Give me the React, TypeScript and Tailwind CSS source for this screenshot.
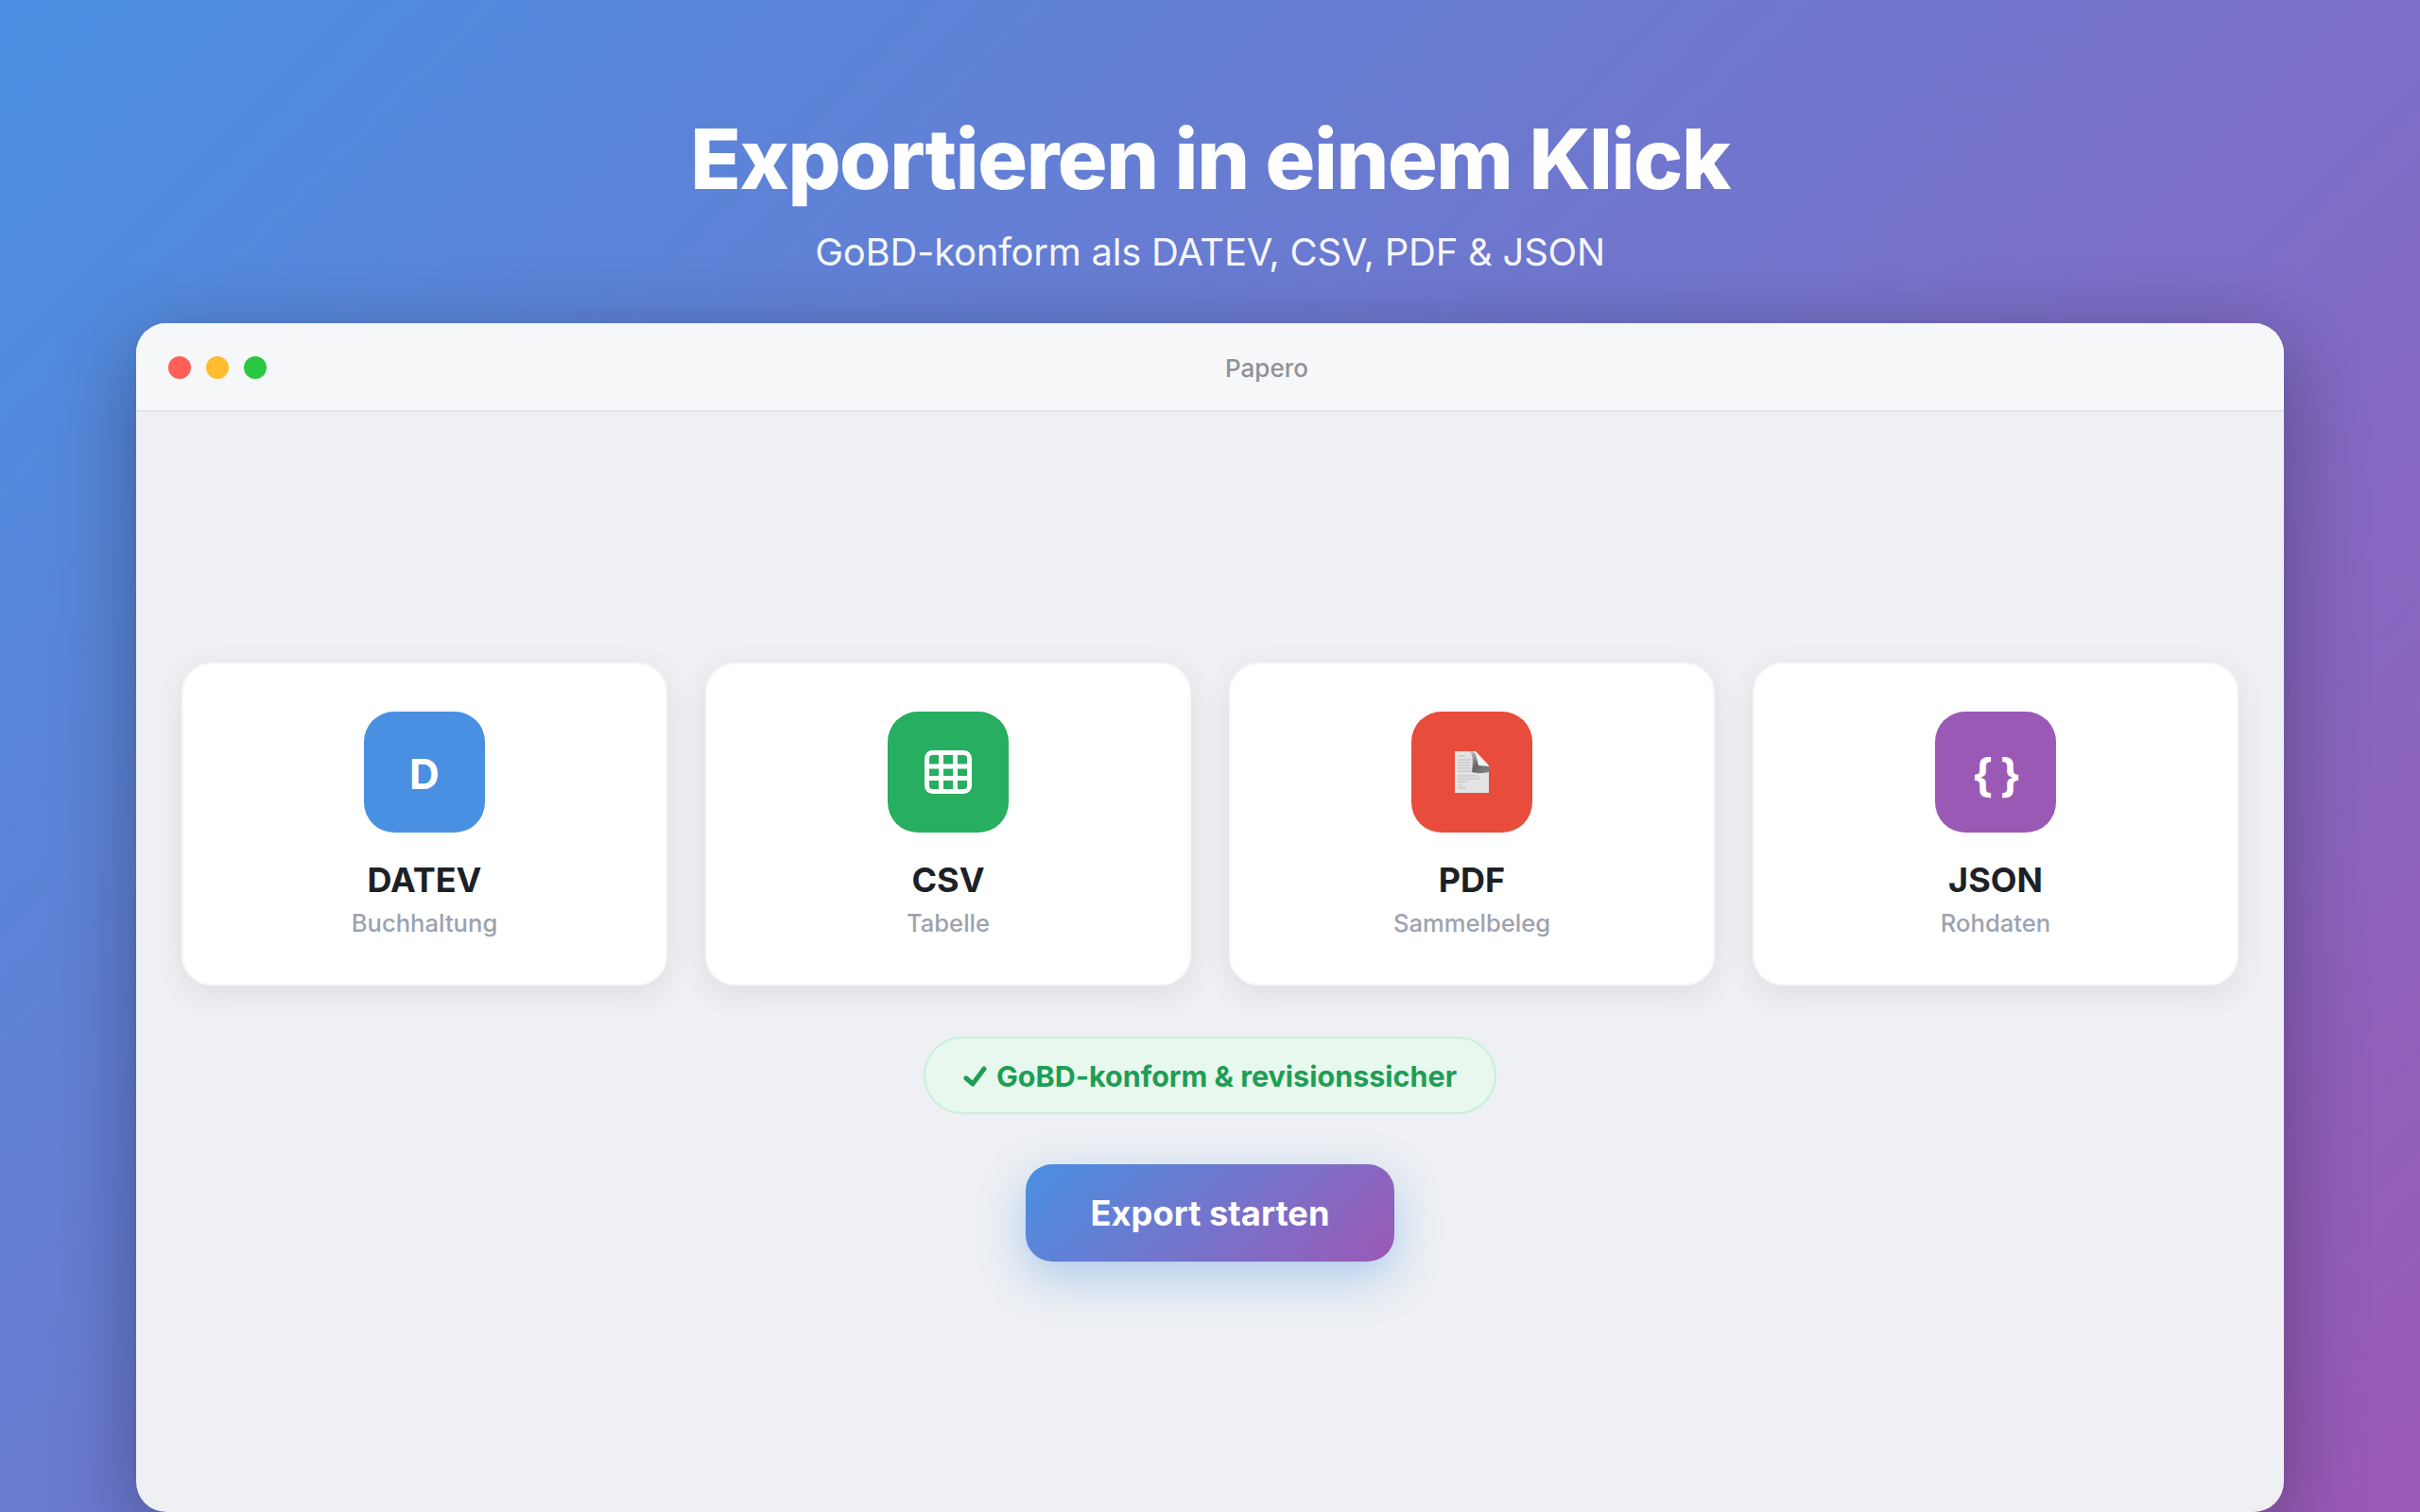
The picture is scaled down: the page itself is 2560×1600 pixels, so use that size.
const FORMATS = [
  { name: 'DATEV', sub: 'Buchhaltung', bg: 'bg-[#4a90e2]', icon: <span className="mt-[3px] text-[44px] font-bold leading-none text-white">D</span> },
  { name: 'CSV', sub: 'Tabelle', bg: 'bg-[#27ae60]', icon: <GridIcon /> },
  { name: 'PDF', sub: 'Sammelbeleg', bg: 'bg-[#e74c3c]', icon: <PageIcon /> },
  { name: 'JSON', sub: 'Rohdaten', bg: 'bg-[#9b59b6]', icon: <span className="mt-[8px] text-[48px] font-bold leading-none tracking-[-2px] text-white">{'{ }'}</span> },
];

function GridIcon() {
  return (
    <svg width="50" height="46" viewBox="0 0 50 46" fill="none" stroke="white" strokeWidth="5">
      <rect x="2.5" y="2.5" width="45" height="41" rx="6" />
      <path d="M17.5 3v40M32.5 3v40M3 17h44M3 29.5h44" />
    </svg>
  );
}

// the page emoji from the PDF card
function PageIcon() {
  return (
    <svg width="36" height="44" viewBox="0 0 36 44" className="blur-[0.5px]">
      <defs>
        <linearGradient id="curl" x1="0" y1="0" x2="1" y2="1">
          <stop offset="0" stopColor="#cfcfcf" />
          <stop offset="0.5" stopColor="#666666" />
          <stop offset="1" stopColor="#858585" />
        </linearGradient>
      </defs>
      <path d="M0 0H18L36 19V44H0Z" fill="#e3e3e3" />
      <path d="M3 5h8M3 9h14M3 12h13M3 15h13M3 18h14M3 21h15M3 26h22M3 29h24M3 32h10M3 36h5M3 39h9" stroke="#bdbdbd" strokeWidth="1" />
      <path d="M18 0H22L36 15V19H25Q23 10 18 0Z" fill="#f2f2f2" />
      <path d="M15 0C20 3 19 14 18 22 24 24 31 23 36 22L36 16 25 15 22 3 19 0Z" fill="url(#curl)" />
    </svg>
  );
}

export default function App() {
  return (
    <div className="flex h-[1600px] w-[2560px] flex-col items-center overflow-hidden bg-[linear-gradient(135deg,#4a90e2_0%,#9b59b6_100%)] font-['Inter',sans-serif]">
      <h1 className="mt-[120px] text-[88px] leading-[96px] font-extrabold tracking-[-0.016em] text-white">Exportieren in einem Klick</h1>
      <p className="mt-[27px] text-[40px] leading-[48px] tracking-[-0.24px] text-white/95">GoBD-konform als DATEV, CSV, PDF &amp; JSON</p>

      <div className="mt-[51px] flex w-[2272px] flex-1 flex-col overflow-hidden rounded-[32px] bg-[#eef0f4] shadow-[0_24px_90px_rgba(0,0,0,0.33)]">
        <div className="flex h-[94px] shrink-0 items-center border-b-2 border-[#e2e4e9] bg-[#f6f7f9] px-[34px] pt-[2px]">
          <div className="flex gap-[16px]">
            <span className="h-[24px] w-[24px] rounded-full bg-[#ff5f57]" />
            <span className="h-[24px] w-[24px] rounded-full bg-[#febc2e]" />
            <span className="h-[24px] w-[24px] rounded-full bg-[#28c840]" />
          </div>
          <div className="ml-[16px] flex-1 text-center text-[26px] font-medium text-[#8e9299]">Papero</div>
        </div>

        <div className="flex flex-1 flex-col items-center justify-center px-[48px]">
          <div className="grid w-full grid-cols-4 gap-[40px]">
            {FORMATS.map((f) => (
              <div key={f.name} className="flex h-[342px] flex-col items-center rounded-[32px] border-2 border-[#f7f8fa] bg-white pt-[50px] shadow-[0_8px_32px_rgba(0,0,0,0.08)]">
                <div className={`flex h-[128px] w-[128px] items-center justify-center rounded-[32px] ${f.bg}`}>{f.icon}</div>
                <div className="mt-[28px] text-[36px] leading-[44px] font-bold text-[#1d2126]">{f.name}</div>
                <div className="mt-[8px] text-[25.6px] leading-[32px] font-medium text-[#9ca3af]">{f.sub}</div>
              </div>
            ))}
          </div>

          <div className="mt-[54px] flex h-[82px] w-[606px] items-center justify-center gap-[10px] rounded-full border-2 border-[#c8efd8] bg-[#e8f8ee] pt-[2px] text-[30.5px] font-bold text-[#1e9e54]">
            <svg width="25" height="22" viewBox="0 0 25 22" fill="none" stroke="#1e9e54" strokeWidth="5" strokeLinecap="round" strokeLinejoin="round">
              <path d="M3 13l7 6L22 3" />
            </svg>
            GoBD-konform &amp; revisionssicher
          </div>

          <button className="mt-[53px] h-[103px] w-[390px] rounded-[28px] bg-[linear-gradient(135deg,#4a90e2,#9b59b6)] pt-[2px] text-[36.3px] font-bold text-white shadow-[0_16px_48px_rgba(74,144,226,0.4)]">
            Export starten
          </button>
        </div>
      </div>
    </div>
  );
}
